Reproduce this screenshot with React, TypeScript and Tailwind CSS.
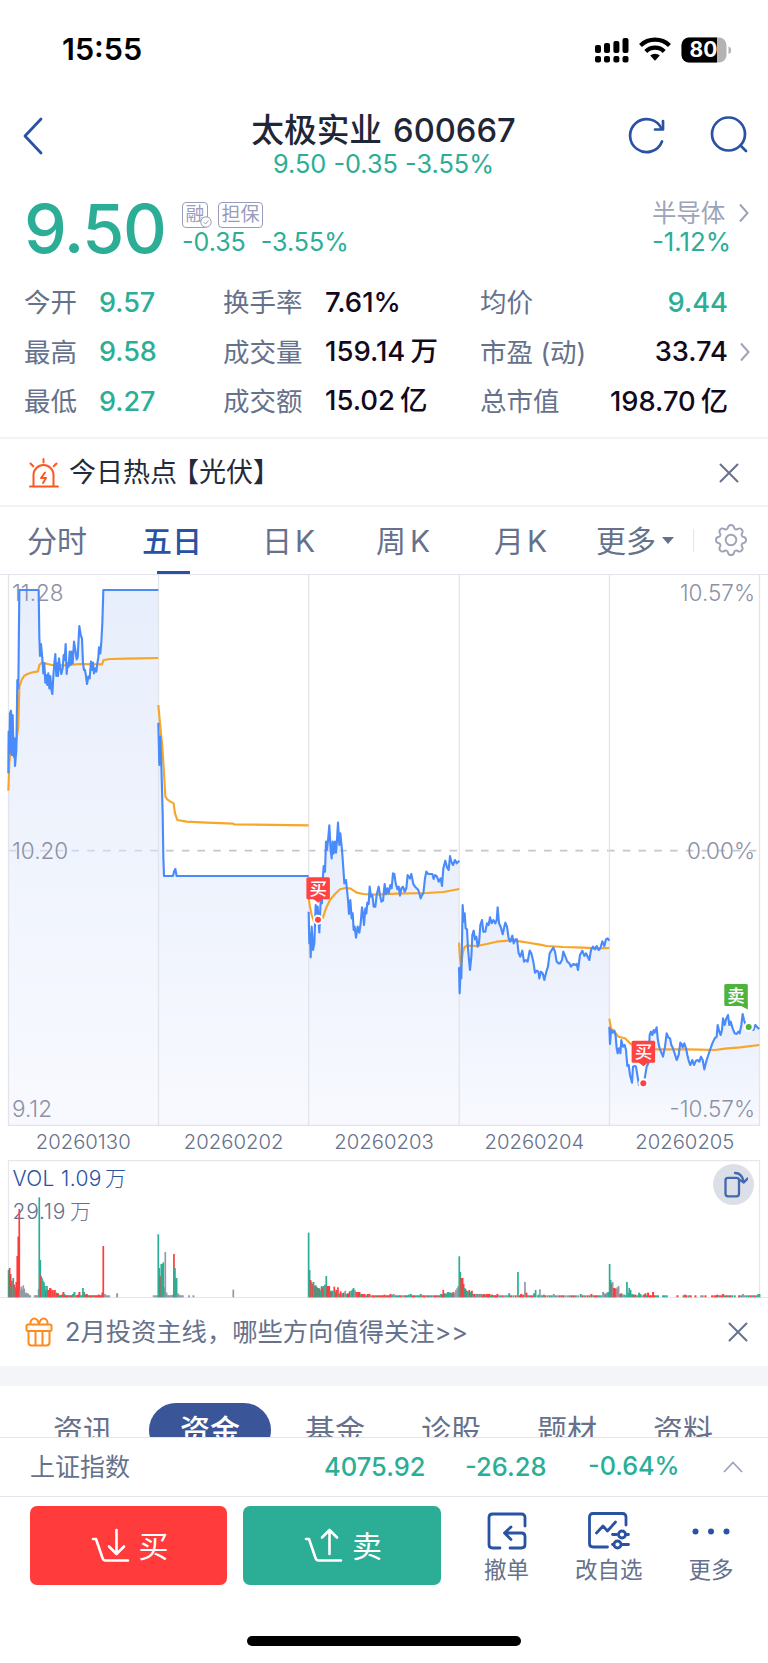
import { ReactNode } from "react";

const UP = "#ff3b3b";
const DOWN = "#2bae95";

const quotes = [
  ["今开", "9.57", "换手率", "7.61%", "", "均价", "9.44", ""],
  ["最高", "9.58", "成交量", "159.14", "万", "市盈 (动)", "33.74", ""],
  ["最低", "9.27", "成交额", "15.02", "亿", "总市值", "198.70", "亿"],
];

// one entry per trading day, points are stored at 3x
const sessions = [
  {
    x: 0, y: -5, left: 25, right: 475, bottom: 1665,
    avg: "25,662 28,580 35,500 45,540 55,470 58,350 65,330 72,318 82,312 98,307 114,304 118,285 125,278 140,281 160,286 190,286 240,282 306,283 311,270 330,267 380,266 475,264",
    price: "25,610 26,485 28,550 30,430 33,422 35,555 38,435 41,560 43,505 45,588 49,540 52,330 55,355 58,60 116,60 118,200 120,258 123,222 127,265 130,310 133,280 136,338 139,315 142,345 145,310 148,355 151,318 154,358 157,372 160,318 163,280 166,252 169,318 172,280 174,318 177,265 180,290 184,312 188,295 191,255 194,270 197,222 200,312 203,280 206,290 209,245 212,285 215,245 218,280 222,215 226,240 230,268 233,262 238,168 242,195 246,205 249,280 252,300 255,300 258,318 261,342 265,320 269,325 273,275 276,300 279,278 282,310 286,295 289,305 292,280 295,262 297,232 301,250 304,215 307,160 310,60 475,60",
  },
  {
    x: 0, y: -5, left: 475, right: 926, bottom: 1665,
    avg: "475,405 480,460 487,530 492,610 496,680 502,688 510,694 521,700 525,730 532,750 560,755 620,758 700,761 702,763 926,766",
    price: "475,458 478,585 481,500 484,585 488,730 490,860 492,918 519,918 522,905 526,897 530,918 926,918",
  },
  {
    x: 300, y: 205, left: 26, right: 478, bottom: 1035,
    avg: "26,355 30,380 35,405 42,425 52,425 68,415 78,385 90,360 105,342 120,328 137,324 152,326 170,338 190,342 230,344 290,341 380,339 430,336 478,327",
    price: "26,395 28,490 30,460 32,532 35,440 39,510 43,490 47,375 50,400 53,380 58,457 62,360 66,370 68,300 71,258 75,275 78,185 81,210 85,172 88,136 92,210 95,235 98,185 101,220 105,185 108,218 111,180 114,128 118,195 121,160 126,210 130,265 133,310 138,300 141,330 144,360 147,402 151,360 155,415 158,400 161,450 164,440 168,473 173,440 178,458 182,430 186,382 189,400 192,435 196,385 199,400 202,368 206,372 209,320 213,350 217,345 221,380 226,380 230,345 236,320 240,345 244,365 249,362 254,312 258,342 262,325 266,340 271,315 275,325 279,280 283,282 287,310 292,328 296,320 300,347 304,325 309,320 314,335 319,325 323,285 330,295 334,282 340,312 345,320 350,325 355,330 362,355 366,345 370,340 375,295 379,275 385,282 391,282 397,282 401,297 405,285 411,290 416,305 422,295 426,318 430,265 436,242 441,262 446,270 450,228 454,245 459,255 465,240 470,250 478,242",
  },
  {
    x: 300, y: 205, left: 477, right: 928, bottom: 1035,
    avg: "477,488 480,535 483,560 488,520 493,502 500,497 530,498 560,492 590,485 625,482 660,484 690,489 720,494 740,498 790,501 850,503 890,505 928,504",
    price: "477,562 479,640 482,560 484,595 488,375 491,425 494,400 497,445 501,448 504,505 507,540 510,570 514,530 517,465 521,452 525,478 529,470 533,500 537,490 541,435 546,420 550,455 556,455 561,430 566,435 570,412 575,430 580,420 586,430 590,420 593,382 597,430 602,440 608,463 613,440 616,428 621,440 626,475 631,485 637,467 641,490 646,478 651,478 656,520 661,530 667,512 672,545 678,540 683,545 689,512 694,520 700,545 705,578 711,572 715,575 718,595 723,575 728,580 733,600 739,575 744,560 749,520 754,512 760,503 765,515 770,545 776,550 780,550 786,540 790,515 796,530 802,545 808,550 813,560 820,552 826,555 830,552 834,570 840,525 847,512 853,528 858,520 863,530 868,540 873,510 879,500 885,508 890,498 896,510 901,505 907,484 913,498 918,478 923,475 928,482",
  },
  {
    x: 600, y: 385, left: 28, right: 478, bottom: 495,
    avg: "28,176 33,205 42,213 55,230 75,235 90,250 110,262 140,268 200,268 260,268 300,269 345,270 375,266 420,262 478,255",
    price: "28,200 30,252 33,210 38,218 43,212 47,228 50,265 53,280 57,265 61,280 64,240 69,260 74,255 78,270 82,318 86,315 90,345 96,368 99,320 104,318 108,320 112,345 117,375 130,370 135,350 140,320 145,310 149,225 153,215 157,225 161,210 164,218 170,202 173,235 178,262 183,275 189,290 195,260 200,220 205,232 210,235 214,255 219,265 224,280 230,300 236,285 241,248 245,252 248,262 253,250 258,265 262,285 267,305 271,315 277,300 282,315 288,302 293,300 298,305 303,290 308,300 313,328 320,300 325,285 330,270 337,250 344,235 350,230 353,195 358,215 362,225 366,210 369,175 374,195 378,178 384,165 388,195 392,185 398,205 404,220 410,222 415,215 419,220 424,195 428,162 432,180 437,195 447,203 460,210 466,195 472,202 478,207",
  },
];

const dates = ["20260130", "20260202", "20260203", "20260204", "20260205"];

// colour (r up, g down, n flat), x and height at 3x
const volume =
  "g26:82 r29:88 r32:70 g34:35 r36:50 g40:58 r43:38 g46:30 r49:46 r52:124 r55:182 r58:265 n61:22 n64:32 n67:24 n70:36 n73:26 n76:12 n79:14 n82:12 n85:11 n88:5 n91:4 n104:4 n107:4 n110:5 n113:5 n116:25 g118:300 g121:112 r123:64 g126:58 g129:50 g132:45 g135:34 r138:20 g141:34 r144:22 r147:22 r150:28 r153:26 g156:18 r159:22 g162:16 r165:22 g168:14 r171:12 r174:12 g177:6 r180:6 g183:6 r186:8 r190:16 g193:10 r196:6 r200:6 r204:6 g208:5 r212:6 r216:6 g219:10 g223:16 n226:6 r230:6 r234:8 r238:16 g242:6 g246:6 g249:28 g252:16 r256:8 r260:10 r264:5 g268:5 r272:5 r276:5 g280:5 r284:5 r288:5 r292:6 r296:8 r300:6 r304:6 r307:14 r310:154 n314:10 n318:6 n322:5 n327:4 n351:12 n461:4 n467:4 n472:5 " +
  "g475:189 g478:88 r481:64 g484:100 g487:100 g490:105 g493:30 n496:136 n499:14 n502:6 n505:5 n508:5 n512:5 n516:5 n519:8 r522:130 g525:88 g528:56 g530:58 n533:12 n536:8 n540:6 n544:5 n548:4 n567:4 n580:4 n700:23 " +
  "g926:194 g929:82 r932:52 g935:46 r938:40 g941:46 g944:34 r947:36 g950:32 r953:28 g956:28 r959:26 g962:20 g965:34 r968:30 g971:34 g975:38 g979:64 r982:34 r985:34 r988:34 g991:20 r994:18 g998:20 r1003:32 g1006:16 r1009:22 r1014:30 g1018:12 r1022:18 g1026:12 r1031:14 n1036:20 g1040:10 r1044:12 r1049:18 g1054:20 g1058:24 g1061:28 n1065:22 r1069:16 r1074:16 r1078:16 g1083:10 r1088:10 r1093:10 g1098:6 r1103:10 r1108:10 n1113:5 r1118:6 r1123:5 g1128:6 r1133:5 r1138:6 r1143:5 r1148:5 " +
  "r1153:8 g1158:6 r1162:5 r1166:4 r1171:10 g1176:8 n1181:10 g1186:5 g1191:5 g1196:4 r1201:5 n1206:4 n1211:4 r1216:5 g1221:6 g1226:8 g1232:10 r1237:4 r1242:5 g1247:5 g1252:5 g1257:6 g1262:10 r1268:5 r1273:5 n1278:5 r1283:5 g1288:5 g1293:5 n1298:4 r1303:4 r1308:5 g1313:5 r1318:6 g1323:10 r1326:8 r1330:22 r1333:12 g1336:10 g1340:12 g1344:16 g1348:14 g1352:14 g1356:12 r1360:16 n1364:12 n1368:22 n1372:28 n1375:34 " +
  "g1378:123 g1381:76 r1384:58 r1388:58 r1391:40 g1394:28 r1397:24 g1400:20 g1404:18 r1408:22 g1412:16 r1416:20 g1420:10 r1424:10 n1428:10 g1432:10 n1436:10 g1440:10 n1444:10 r1448:8 r1452:10 g1456:8 r1460:10 r1464:10 r1468:10 g1472:6 r1476:8 g1480:5 r1484:5 r1488:5 r1492:10 n1497:5 g1502:5 r1508:5 n1514:5 g1520:6 g1527:12 r1533:5 g1540:5 r1547:5 g1554:76 r1559:6 r1563:10 r1569:8 n1575:46 r1579:14 g1584:5 r1590:5 r1596:5 g1602:12 g1607:22 n1613:6 g1616:8 n1620:24 g1625:6 g1631:8 r1636:5 n1643:5 g1649:5 g1655:5 n1661:10 g1667:5 n1673:5 r1679:5 g1685:5 r1690:5 n1696:5 n1703:5 g1709:5 r1715:5 r1721:5 g1727:5 n1734:5 g1742:10 r1748:5 g1755:5 r1762:5 g1768:5 r1774:10 g1780:5 r1785:5 r1790:5 g1795:5 g1800:5 n1805:5 n1809:16 n1813:12 g1817:10 n1821:14 g1825:16 " +
  "g1829:100 g1832:52 r1835:42 n1838:46 r1841:28 r1844:28 r1848:26 n1852:30 n1856:34 g1860:10 r1864:12 n1868:8 g1873:8 n1877:6 g1881:46 g1885:14 g1888:28 g1892:22 g1896:10 r1901:8 r1906:8 g1912:6 g1917:14 g1921:10 n1926:5 r1932:8 r1936:12 g1940:5 r1944:14 r1949:5 r1953:6 r1959:16 r1964:5 g1969:5 g1974:5 g1989:4 g1994:4 g2000:4 r2032:4 g2050:4 r2055:8 r2059:4 g2066:4 r2072:4 r2086:4 n2103:4 n2108:4 r2116:4 r2136:4 r2143:5 r2148:4 r2152:8 g2157:4 r2163:5 r2169:10 g2175:4 r2180:4 g2185:4 r2190:4 g2196:4 g2204:4 r2217:4 g2223:4 n2229:10 n2234:5 g2240:5 g2246:4 r2252:4 g2258:4 r2264:4 g2270:6 n2274:10 g2278:10";

const barColors: Record<string, string> = { r: UP, g: DOWN, n: "#9399a8" };

const volumeBars = volume.split(" ").map((item) => {
  const [x, h] = item.slice(1).split(":").map(Number);
  // low bars run together along the base line
  const width = h <= 16 && x > 130 ? 2 : 1.7;
  return { x: x / 3, h: Math.max(h / 3, 2), width, fill: barColors[item[0]] };
});

// eight round teeth joined by round notches
const gearPoint = (deg: number) => {
  const a = (deg * Math.PI) / 180;
  return `${(17 + 13.2 * Math.cos(a)).toFixed(2)} ${(17 + 13.2 * Math.sin(a)).toFixed(2)}`;
};
const gearPath =
  `M${gearPoint(-13)}` +
  [0, 45, 90, 135, 180, 225, 270, 315]
    .map((d) => `A3.100 3.100 0 0 1 ${gearPoint(d + 13)}A2.400 2.400 0 0 0 ${gearPoint(d + 32)}`)
    .join("") +
  "Z";

const Chevron = ({ className = "" }: { className?: string }) => (
  <svg width="10" height="20" viewBox="0 0 10 20" fill="none" stroke="#9ea4b8" strokeWidth="2" className={className}>
    <path d="M1 1.5 8.5 10 1 18.5" />
  </svg>
);

const CloseIcon = () => (
  <svg width="20" height="20" viewBox="0 0 20 20" fill="none" stroke="#66718c" strokeWidth="2" strokeLinecap="round">
    <path d="M1.5 1.5l17 17M18.5 1.5l-17 17" />
  </svg>
);

const StatusBar = () => (
  <div className="flex h-[98px] items-center pt-[1px] pr-[36px] pl-[62px]">
    <p className="text-[30.5px] font-semibold text-black">15:55</p>
    <svg width="138" height="28" viewBox="0 0 138 28" className="ml-auto">
      {[4, 13, 22.4, 31.5].map((x, i) => (
        <g key={x}>
          <rect x={x - 3} y={[9, 7, 5, 2][i]} width="6" height={[8, 10, 12, 15][i]} rx="2" />
          <rect x={x - 3} y="20" width="6" height="6.5" rx="2" />
        </g>
      ))}
      <g fill="none" stroke="#000" strokeWidth="4.2">
        <path d="M46.5 9.5a21 21 0 0 1 29 0" />
        <path d="M51.8 15.4a13 13 0 0 1 18.4 0" />
      </g>
      <path d="M61 24.8l-4.8-5.2a7 7 0 0 1 9.6 0z" />
      <clipPath id="battery">
        <rect x="87.5" y="1.5" width="45" height="25" rx="7.5" />
      </clipPath>
      <g clipPath="url(#battery)">
        <rect x="87" y="0" width="46" height="28" fill="#b3b3b3" />
        <rect x="87" y="0" width="36" height="28" />
      </g>
      <path d="M134.5 10.5c3.6 1 3.6 6.5 0 7.500z" fill="#b3b3b3" />
      <text x="109.5" y="21.3" fill="#fff" textAnchor="middle" fontSize="21" fontWeight="700">80</text>
    </svg>
  </div>
);

const Header = () => (
  <div className="flex h-[90px] items-start justify-between pr-[20px] pl-[23px]">
    <svg width="20" height="38" viewBox="0 0 20 38" fill="none" stroke="#2952a3" strokeWidth="2.8" strokeLinecap="round" strokeLinejoin="round" className="mt-[19px] mr-[82px]">
      <path d="M18 2 2 19l16 17" />
    </svg>
    <div className="ml-[15px] flex flex-col items-center">
      <h1 className="mt-[11px] flex h-[42px] items-center gap-[11px] text-[32.7px] font-medium text-[#1f2638]">
        <span>太极实业</span>
        <span>600667</span>
      </h1>
      <p className="text-[25.3px] leading-[26px] text-[#2bae95]">9.50 -0.35 -3.55%</p>
    </div>
    <div className="mt-[18px] flex gap-[45px]">
      <svg width="38" height="38" viewBox="0 0 38 38" fill="none" stroke="#2952a3" strokeWidth="2.7" strokeLinecap="round" strokeLinejoin="round">
        <path d="M35 25.5A16.5 16.5 0 1 1 34.5 12.5" />
        <path d="M36 5v8.500h-8" />
      </svg>
      <svg width="38" height="38" viewBox="0 0 38 38" fill="none" stroke="#2952a3" strokeWidth="2.7" strokeLinecap="round">
        <circle cx="18.5" cy="18" r="16.5" />
        <path d="m30.500 29.500 5.500 5.500" />
      </svg>
    </div>
  </div>
);

const Summary = () => (
  <div className="flex h-[82px] items-start pr-[15px] pl-[24px]">
    <p className="mt-[10px] w-[158px] text-[68px] leading-[60px] font-medium tracking-[-1.3px] text-[#2bae95]">9.50</p>
    <div className="mt-[14px]">
      <div className="flex gap-[10px] text-[19px] leading-[23px] text-[#9a9cbc]">
        <span className="relative h-[26px] w-[26px] rounded-[4px] border border-[#9a9cbc] text-center">
          融
          <svg width="12" height="12" viewBox="0 0 12 12" fill="#fff" stroke="#9a9cbc" className="absolute -right-[5px] -bottom-[1px]">
            <circle cx="6" cy="6" r="5.200" />
            <path d="m3.500 6 2 2 3-3.500" fill="none" />
          </svg>
        </span>
        <span className="h-[26px] w-[45px] rounded-[4px] border border-[#9a9cbc] text-center">担保</span>
      </div>
      <p className="mt-px flex gap-[15px] text-[25px] leading-[27px] text-[#2bae95]">
        <span>-0.35</span>
        <span>-3.55%</span>
      </p>
    </div>
    <div className="mt-[11px] ml-auto">
      <p className="flex h-[28px] items-center text-[24.5px] text-[#9ea4b8]">
        半导体
        <Chevron className="ml-[14px]" />
      </p>
      <p className="mt-px mr-[22px] text-right text-[25.8px] leading-[28px] text-[#2bae95]">-1.12%</p>
    </div>
  </div>
);

const QuoteGrid = () => (
  <div className="h-[169px] border-b-2 border-[#f3f4f7] pt-[8px]">
    {quotes.map(([a, av, b, bv, bu, c, cv, cu], i) => (
      <div key={a} className="flex h-[49.3px] items-center pl-[24px] text-[26.5px] text-[#66718c]">
        <span className="w-[75px]">{a}</span>
        <span className="w-[124px] text-[27px] font-medium text-[#2bae95]">{av}</span>
        <span className="w-[102px]">{b}</span>
        <span className="w-[155px] text-[27.5px] font-medium text-[#120a1c]">
          {bv}
          <span className="ml-[5px]">{bu}</span>
        </span>
        <span>{c}</span>
        <span className={"ml-auto text-[27.3px] font-medium " + (i === 0 ? "text-[#2bae95]" : "text-[#120a1c]")}>
          {cv}
          {cu && <span className="ml-[5px]">{cu}</span>}
        </span>
        <span className="w-[40px] pl-[12px]">{i === 1 && <Chevron />}</span>
      </div>
    ))}
  </div>
);

const HotTopic = () => (
  <div className="flex h-[68px] items-center border-b-2 border-[#f1f2f5] pt-px pr-[29px] pl-[28px]">
    <svg width="32" height="30" viewBox="0 0 32 30" fill="none" stroke="#ff5722" strokeWidth="2" strokeLinecap="round">
      <path d="M2 28.500h28M5.500 28V17a10 10 0 0 1 20 0v11" />
      <path d="M15.500 1v3.500M2.500 5.500l2.800 2.800M28.500 5.500l-2.800 2.800" />
      <path d="m17 14.500-4 5.500h5l-3 5" strokeLinejoin="round" />
    </svg>
    <p className="ml-[9px] flex text-[27px] text-[#232a3b]">
      今日热点<span className="-ml-[5px]">【光伏】</span>
    </p>
    <div className="ml-auto">
      <CloseIcon />
    </div>
  </div>
);

const PeriodTabs = () => (
  <div className="flex h-[68px] border-b border-[#e4e5ec] pl-[27px] text-[30px] text-[#66718c]">
    <div className="grid grid-cols-[115px_120px_114px_118px_102px_97px] items-center">
      <span>分时</span>
      <span className="relative flex h-full items-center font-medium text-[#2952a3]">
        五日
        <span className="absolute bottom-0 left-[15px] h-[3px] w-[33px] bg-[#2952a3]" />
      </span>
      <span className="flex gap-[3px]">日<span>K</span></span>
      <span className="flex gap-[4px]">周<span>K</span></span>
      <span className="flex gap-[3px]">月<span>K</span></span>
      <span className="flex items-center gap-[6px]">
        更多
        <svg width="12" height="7" viewBox="0 0 12 7" fill="#66718c">
          <path d="M0 0h12L6 7z" />
        </svg>
      </span>
    </div>
    <div className="mt-[22px] h-[23px] w-px bg-[#e4e5ec]" />
    <svg width="34" height="34" viewBox="0 0 34 34" fill="none" stroke="#9ea4b8" strokeWidth="1.9" strokeLinejoin="round" className="mt-[16px] ml-[19.500px]">
      <path d={gearPath} />
      <circle cx="17" cy="17" r="5.3" />
    </svg>
  </div>
);

const Flag = ({ x, y, sell }: { x: number; y: number; sell?: boolean }) => (
  <g transform={`translate(${x} ${y})`} fill={sell ? "#4db33d" : "#ff4242"}>
    <rect width="23.5" height="22" rx="1.5" />
    <path d={sell ? "M15 21h8.500v4.500z" : "M6 21h11.500L11.800 25.500z"} />
    <text x="11.8" y="17.6" fontSize="17.5" fontWeight="500" textAnchor="middle" fill="#fff">
      {sell ? "卖" : "买"}
    </text>
  </g>
);

const PriceChart = () => (
  <svg width="768" height="551" viewBox="0 0 768 551" className="block">
    <defs>
      <linearGradient id="area" x1="0" y1="0" x2="0" y2="1">
        <stop offset="0" stopColor="#d0ddf7" stopOpacity="0.5" />
        <stop offset="1" stopColor="#f1f4ff" stopOpacity="0.5" />
      </linearGradient>
    </defs>
    <path d="M8.500 275.700h751" stroke="#c4c6d4" strokeWidth="1.8" strokeDasharray="7.6 8.15" />
    {sessions.map((s, i) => (
      <polygon
        key={i}
        transform={`translate(${s.x} ${s.y}) scale(0.33333)`}
        points={`${s.left},${s.bottom} ${s.price} ${s.right},${s.bottom}`}
        fill="url(#area)"
      />
    ))}
    <path d="M8.500 0v550M158.500 0v550M308.700 0v550M459.200 0v550M609.500 0v550M759.500 0v550M8 550.300h752" stroke="#e3e4ea" strokeWidth="1.3" />
    <g fontSize="22.5" fill="#8c91a6" fontWeight="300">
      <text x="12" y="26">11.28</text>
      <text x="12" y="283.5">10.20</text>
      <text x="12" y="541.5">9.12</text>
      <g textAnchor="end">
        <text x="755" y="26">10.57%</text>
        <text x="755" y="283.5">0.00%</text>
        <text x="755" y="541.5">-10.57%</text>
      </g>
    </g>
    {sessions.map((s, i) => (
      <g key={i} transform={`translate(${s.x} ${s.y}) scale(0.33333)`} fill="none" strokeWidth="6.4" strokeLinejoin="round">
        <polyline points={s.avg} stroke="#f7a628" />
        <polyline points={s.price} stroke="#4a8bfc" />
      </g>
    ))}
    <g stroke="#fff" strokeWidth="2">
      <circle cx="318" cy="344.7" r="4" fill="#ff4242" />
      <circle cx="643.3" cy="508.3" r="4" fill="#ff4242" />
      <circle cx="748.7" cy="452" r="4" fill="#4db33d" />
    </g>
    <Flag x={306.4} y={302.3} />
    <Flag x={631.6} y={465.7} />
    <Flag x={724.3} y={409} sell />
  </svg>
);

const VolumeChart = () => (
  <div className="relative">
    <svg width="768" height="138" viewBox="0 0 768 138" className="block">
      <path d="M8.500 137V.7h751V137M0 137.500h768" fill="none" stroke="#e6e7ed" strokeWidth="1.2" />
      <g fontSize="21" fontWeight="300">
        <g fill="#2952a3">
          <text x="12.5" y="26" textLength="89">VOL 1.09</text>
          <text x="105" y="26">万</text>
        </g>
        <g fill="#66718c">
          <text x="12.5" y="59" textLength="53">29.19</text>
          <text x="70" y="59">万</text>
        </g>
      </g>
      {volumeBars.map((b) => (
        <rect key={b.x} x={b.x - 0.9} y={137.3 - b.h} width={b.width} height={b.h} fill={b.fill} />
      ))}
    </svg>
    <div className="absolute top-[4px] right-[14px] flex h-[41px] w-[41px] items-center justify-center rounded-full bg-[#dddfe8]">
      <svg width="28" height="28" viewBox="0 0 28 28" fill="none" stroke="#4268b0" strokeWidth="2.3" strokeLinecap="round" strokeLinejoin="round">
        <rect x="5.5" y="6.8" width="13.5" height="18.5" rx="2.5" />
        <path d="M15 2c4.500 0 7.500 2.500 8.800 9M20 9l3.800 2.500L27.500 7.500" />
      </svg>
    </div>
  </div>
);

const Promo = () => (
  <div className="flex h-[68px] items-center pr-[20px] pl-[25px]">
    <svg width="28" height="30" viewBox="0 0 28 30" fill="none" stroke="#ff8a1f" strokeWidth="2" strokeLinejoin="round">
      <rect x="1.5" y="7.5" width="25" height="6.5" rx="1.5" />
      <path d="M3.500 14v11.500a3 3 0 0 0 3 3h15a3 3 0 0 0 3-3V14M10.500 14v14M17.500 14v14" />
      <path d="M5.500 7.500C5 3.500 7 1.500 9.500 1.500S13.500 5 14 7.500C14.500 5 16 1.500 18.500 1.500s4.500 2 4 6" />
    </svg>
    <p className="ml-[12px] text-[25.3px] text-[#66718c]">2月投资主线，哪些方向值得关注&gt;&gt;</p>
    <div className="ml-auto">
      <CloseIcon />
    </div>
  </div>
);

const SectionTabs = () => (
  <div className="h-[51px] overflow-hidden pt-[17px]">
    <div className="grid h-[54px] grid-cols-[149px_122px_115px_117px_117px_148px] items-center text-[30px] text-[#66718c]">
      <span className="pl-[53px]">资讯</span>
      <span className="flex h-full items-center justify-center rounded-full bg-[#3b5698] font-medium text-white">资金</span>
      <span className="pl-[34px]">基金</span>
      <span className="pl-[35px]">诊股</span>
      <span className="pl-[34px]">题材</span>
      <span className="pl-[33px]">资料</span>
    </div>
  </div>
);

const IndexBar = () => (
  <div className="flex h-[60px] items-center border-y border-[#e4e5ec] pr-[25px] pl-[30px] text-[25px] font-medium text-[#2bae95]">
    <span className="font-normal text-[#66718c]">上证指数</span>
    <span className="ml-auto w-[141px] text-[25.5px]">4075.92</span>
    <span className="w-[123px] text-[25.5px]">-26.28</span>
    <span className="w-[135px] text-[25.2px]">-0.64%</span>
    <svg width="20" height="12" viewBox="0 0 20 12" fill="none" stroke="#9ea4b8" strokeWidth="1.8">
      <path d="m1 11 9-9.500 9 9.500" />
    </svg>
  </div>
);

const Action = ({ label, children }: { label: string; children: ReactNode }) => (
  <div className="flex flex-col items-center">
    <svg width="44" height="40" viewBox="0 0 44 40" fill="none" stroke="#2952a3" strokeWidth="2.8" strokeLinecap="round" strokeLinejoin="round">
      {children}
    </svg>
    <span className="mt-[5px] text-[22.5px] leading-[26px] text-[#66718c]">{label}</span>
  </div>
);

const TradeBar = () => (
  <div className="flex h-[139px] items-start pt-[9px] pl-[30px]">
    <button className="flex h-[79px] w-[197px] items-center justify-center gap-[8px] rounded-[7px] bg-[#ff3b3b] pl-[2px] text-[30px] text-white">
      <svg width="40" height="36" viewBox="0 0 40 36" fill="none" stroke="#fff" strokeWidth="2.6" strokeLinecap="round" strokeLinejoin="round">
        <path d="M2 11h3l6.500 19q.7 2.500 3 2.500H37" />
        <path d="M25.500 2v23M18 18.500l7.500 7.500 7.500-7.500" />
      </svg>
      买
    </button>
    <button className="ml-[16px] flex h-[79px] w-[198px] items-center justify-center gap-[8px] rounded-[7px] bg-[#2bae95] pl-[2px] text-[30px] text-white">
      <svg width="40" height="36" viewBox="0 0 40 36" fill="none" stroke="#fff" strokeWidth="2.6" strokeLinecap="round" strokeLinejoin="round">
        <path d="M2 11h3l6.500 19q.7 2.500 3 2.500H37" />
        <path d="M25.500 26V2M18 9.500 25.500 2l7.500 7.500" />
      </svg>
      卖
    </button>
    <div className="mt-[6px] ml-[43px] flex gap-[46px]">
      <Action label="撤单">
        <path d="M40 14V5.500q0-3.500-3.500-3.500H7.500Q4 2 4 5.500v27Q4 36 7.500 36h7.500" />
        <path d="M25 36H36.500q3.500 0 3.500-3.500v-8q0-3.500-3.500-3.500H20M26 15 19.500 21l6.500 6.500" />
      </Action>
      <Action label="改自选">
        <path d="M39 13V5q0-3.500-3.500-3.500H6Q2.500 1.500 2.500 5v26.500Q2.500 35 6 35H20.500" />
        <path d="m9.500 21 6.500-7 4.500 5 8-9M25.500 22.500h4M38.500 22.500h3M25.500 32.500h1M34.500 32.500h7" />
        <circle cx="35" cy="22.5" r="3.5" />
        <circle cx="30.5" cy="32.5" r="3.5" />
      </Action>
      <Action label="更多">
        <g fill="#2952a3" stroke="none">
          <circle cx="6.5" cy="19.5" r="3" />
          <circle cx="22" cy="19.5" r="3" />
          <circle cx="37.5" cy="19.5" r="3" />
        </g>
      </Action>
    </div>
  </div>
);

const App = () => {
  return (
    <div className="h-[1663px] w-[768px] overflow-hidden bg-white font-['Inter','Noto_Sans_CJK_SC',sans-serif] leading-none whitespace-nowrap">
      <StatusBar />
      <Header />
      <Summary />
      <QuoteGrid />
      <HotTopic />
      <PeriodTabs />
      <PriceChart />
      <div className="flex h-[34px] items-center px-[8px] pb-[2px] text-[20.3px] font-light text-[#66718c]">
        {dates.map((d) => (
          <span key={d} className="flex-1 text-center">{d}</span>
        ))}
      </div>
      <VolumeChart />
      <Promo />
      <div className="h-[20px] bg-[#f4f5f8]" />
      <SectionTabs />
      <IndexBar />
      <TradeBar />
      <div className="mx-auto h-[10px] w-[274px] rounded-full bg-black" />
    </div>
  );
};

export default App;
